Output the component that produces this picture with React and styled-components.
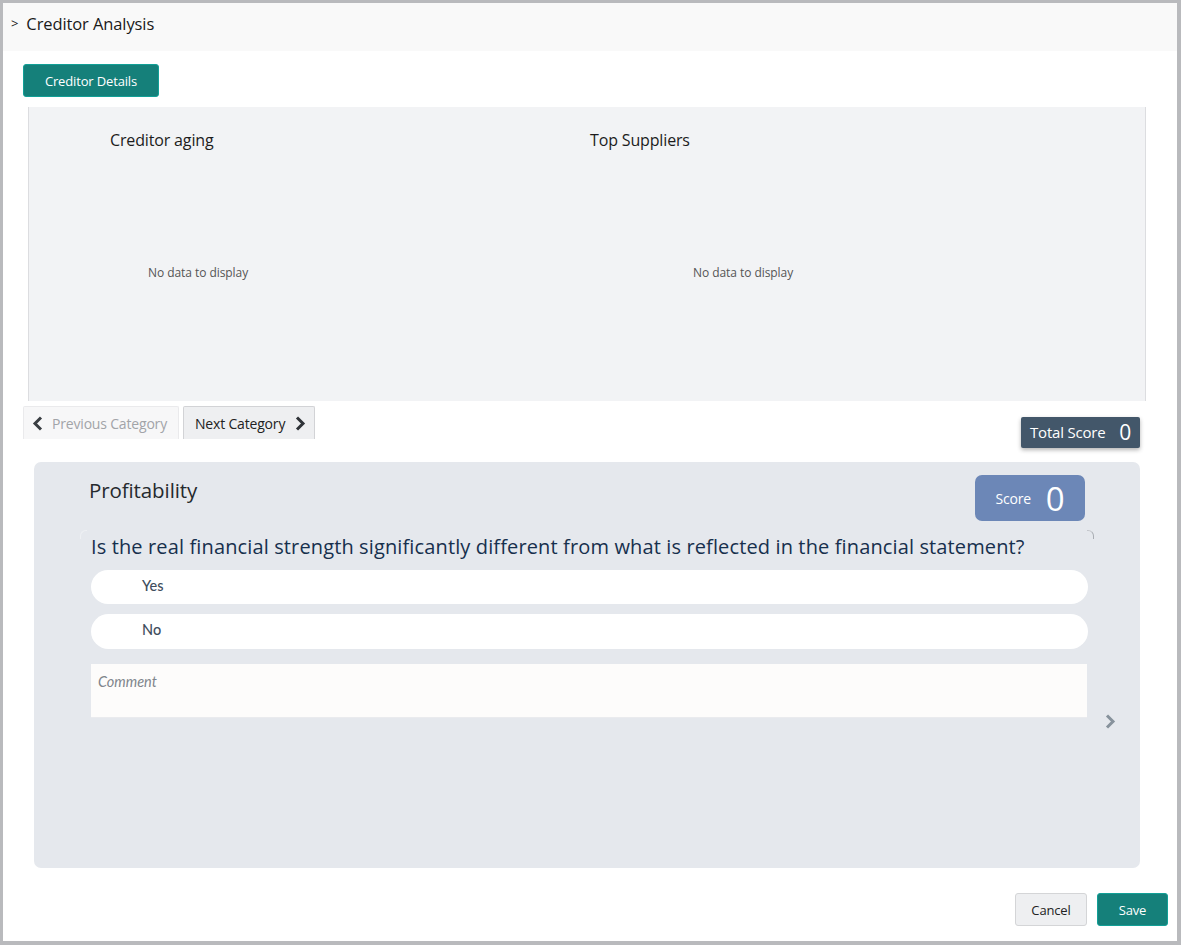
import React from 'react';
import styled, { createGlobalStyle } from 'styled-components';

const GlobalStyle = createGlobalStyle`
  html, body {
    margin: 0;
    padding: 0;
    background: #fff;
    font-family: "Open Sans", "Noto Sans", "Liberation Sans", sans-serif;
  }
  * { box-sizing: border-box; }
`;

const Frame = styled.div`
  width: 1181px;
  height: 945px;
  border: solid #b9babd;
  border-width: 3px 4px 4px 3px;
  background: #fff;
  overflow: hidden;
`;

const Header = styled.div`
  height: 48px;
  background: #f9f9f9;
  display: flex;
  align-items: center;
  padding: 0 0 8px 8px;
  gap: 8px;
  color: #1a1a1a;
  font-size: 16.5px;
  letter-spacing: -0.1px;
`;

const Caret = styled.span`
  font-size: 13px;
`;

const DetailsRow = styled.div`
  padding: 13px 0 0 20px;
  height: 56px;
`;

const Button = styled.button`
  height: 33px;
  border-radius: 3px;
  font-family: inherit;
  font-size: 13px;
  letter-spacing: -0.15px;
  padding: 0;
  width: ${p => p.$width}px;
  color: ${p => (p.$primary ? '#fff' : '#222')};
  background: ${p => (p.$primary ? '#15807a' : '#eeeff1')};
  border: 1px solid ${p => (p.$primary ? '#12a097' : '#d4d5d7')};
`;

const ChartPanel = styled.div`
  margin-left: 25px;
  width: 1118px;
  height: 294px;
  background: #f2f3f5;
  border-left: 1px solid #dcdde0;
  border-right: 1px solid #dcdde0;
  display: grid;
  grid-template-columns: 481px 1fr;
`;

const Chart = styled.div`
  padding: 23px 0 0 ${p => p.$titleLeft}px;
`;

const ChartTitle = styled.div`
  font-size: 16px;
  line-height: 21px;
  color: #1c1c1c;
  letter-spacing: -0.15px;
`;

const NoData = styled.div`
  margin: 114px 0 0 ${p => p.$left}px;
  font-size: 12px;
  line-height: 16px;
  color: #555;
  letter-spacing: -0.06px;
`;

const NavRow = styled.div`
  display: flex;
  align-items: flex-start;
  padding: 5px 37px 0 20px;
  height: 61px;
  gap: 4px;
`;

const NavButton = styled.div`
  height: 33px;
  width: ${p => p.$width}px;
  display: flex;
  align-items: center;
  gap: ${p => p.$gap}px;
  padding: 1px 0 0 ${p => p.$pad}px;
  font-size: 14px;
  letter-spacing: -0.18px;
  color: ${p => (p.$disabled ? '#a2a4a8' : '#222')};
  background: ${p => (p.$disabled ? '#f7f7f8' : '#eeeff1')};
  border: 1px solid ${p => (p.$disabled ? '#eaeaec' : '#d2d3d6')};
  border-bottom: none;
  border-radius: 2px 2px 0 0;
`;

const TotalScore = styled.div`
  margin: 11px 0 0 auto;
  width: 119px;
  height: 31px;
  background: #43576a;
  border-radius: 2px;
  box-shadow: 0 2px 4px rgba(0, 0, 0, 0.3);
  color: #fff;
  display: flex;
  align-items: center;
  justify-content: space-between;
  padding: 0 9px 2px 9px;
  font-size: 15px;
  letter-spacing: -0.2px;
`;

const TotalValue = styled.span`
  font-size: 21px;
`;

const Card = styled.div`
  position: relative;
  margin-left: 31px;
  width: 1106px;
  height: 406px;
  background: #e5e8ed;
  border-radius: 7px;
  padding: 13px 55px 0 55px;
`;

const CardTop = styled.div`
  display: flex;
  justify-content: space-between;
  align-items: flex-start;
  height: 58px;
`;

const CardTitle = styled.div`
  font-size: 20.5px;
  line-height: 27px;
  letter-spacing: -0.1px;
  color: #262a2e;
  margin-top: 2px;
`;

const ScoreBadge = styled.div`
  width: 110px;
  height: 46px;
  background: #6c87b7;
  border-radius: 7px;
  color: #fff;
  display: flex;
  align-items: center;
  justify-content: center;
  gap: 15px;
  font-size: 14px;
  letter-spacing: -0.2px;
`;

const ScoreValue = styled.span`
  font-size: 33px;
  line-height: 1;
`;

const Question = styled.div`
  position: relative;
  padding-left: 2px;
  font-size: 20px;
  line-height: 27px;
  font-weight: 500;
  letter-spacing: 0.13px;
  color: #17304d;
  white-space: nowrap;
  margin-bottom: 10px;

  &::before,
  &::after {
    content: '';
    position: absolute;
    top: -3px;
    width: 6px;
    height: 8px;
    border-top: 1px solid #eef0f3;
  }

  &::before {
    left: -9px;
    border-left: 1px solid #eef0f3;
    border-top-left-radius: 6px;
  }

  &::after {
    left: 998px;
    border-right: 1px solid #a9adb3;
    border-top-color: #c3c6cb;
    border-top-right-radius: 6px;
  }
`;

const Option = styled.div`
  margin-left: 2px;
  width: 997px;
  height: ${p => p.$height}px;
  background: #fff;
  border-radius: 18px;
  display: flex;
  align-items: center;
  padding: 0 0 4px 51px;
  margin-bottom: 10px;
  font-size: 14.5px;
  color: #3f4e5e;
  font-family: "Lato", sans-serif;
  font-weight: 500;
`;

const Comment = styled.div`
  margin: 15px 0 0 2px;
  width: 996px;
  height: 54px;
  background: #fdfcfb;
  border-bottom: 1px solid #eaebee;
  padding: 9px 7px;
  font-family: "Lato", sans-serif;
  font-style: italic;
  font-size: 14.5px;
  color: #80858c;
`;

const NextArrow = styled.svg`
  position: absolute;
  left: 1070px;
  top: 252px;
`;

const Footer = styled.div`
  display: flex;
  justify-content: flex-end;
  gap: 10px;
  padding: 25px 9px 0 0;
`;

const Chevron = ({ left, color = '#2f3338' }) => (
  <svg width="12" height="15" viewBox="0 0 12 15">
    <path
      d={left ? 'M9 1.5 3 7.5l6 6' : 'M3 1.5l6 6-6 6'}
      fill="none"
      stroke={color}
      strokeWidth="3"
    />
  </svg>
);

export default function App() {
  return (
    <>
      <GlobalStyle />
      <Frame>
        <Header>
          <Caret>&gt;</Caret>
          <span>Creditor Analysis</span>
        </Header>
        <DetailsRow>
          <Button $primary $width={136}>Creditor Details</Button>
        </DetailsRow>
        <ChartPanel>
          <Chart $titleLeft={81}>
            <ChartTitle>Creditor aging</ChartTitle>
            <NoData $left={38}>No data to display</NoData>
          </Chart>
          <Chart $titleLeft={80}>
            <ChartTitle>Top Suppliers</ChartTitle>
            <NoData $left={103}>No data to display</NoData>
          </Chart>
        </ChartPanel>
        <NavRow>
          <NavButton $disabled $width={156} $pad={8} $gap={8}>
            <Chevron left color="#3a3e43" />
            <span>Previous Category</span>
          </NavButton>
          <NavButton $width={132} $pad={11} $gap={9}>
            <span>Next Category</span>
            <Chevron />
          </NavButton>
          <TotalScore>
            <span>Total Score</span>
            <TotalValue>0</TotalValue>
          </TotalScore>
        </NavRow>
        <Card>
          <CardTop>
            <CardTitle>Profitability</CardTitle>
            <ScoreBadge>
              <span>Score</span>
              <ScoreValue>0</ScoreValue>
            </ScoreBadge>
          </CardTop>
          <Question>Is the real financial strength significantly different from what is reflected in the financial statement?</Question>
          <Option $height={34}>Yes</Option>
          <Option $height={35}>No</Option>
          <Comment>Comment</Comment>
          <NextArrow width="12" height="15" viewBox="0 0 12 15">
            <path d="M3 1.5l6 6-6 6" fill="none" stroke="#87929c" strokeWidth="3" />
          </NextArrow>
        </Card>
        <Footer>
          <Button $width={72}>Cancel</Button>
          <Button $primary $width={71}>Save</Button>
        </Footer>
      </Frame>
    </>
  );
}
